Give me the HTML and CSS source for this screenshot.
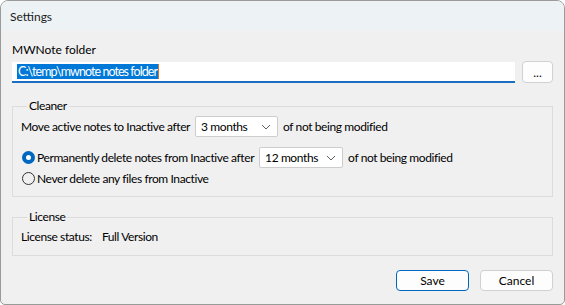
FILE: index.html
```html
<!DOCTYPE html>
<html lang="en">

<head>
    <meta charset="UTF-8">
    <title>Settings</title>
    <link rel="stylesheet" href="styles.css">
</head>

<body>
    <div class="window">
        <div class="titlebar">Settings</div>
        <div class="content">
            <div class="label">MWNote folder</div>
            <div class="folder-row">
                <div class="textbox"><span class="selection">C:\temp\mwnote notes folder</span><span class="caret"></span></div>
                <div class="btn btn-browse">...</div>
            </div>

            <fieldset class="group group-cleaner">
                <legend>Cleaner</legend>
                <div class="row">
                    <span>Move active notes to Inactive after</span>
                    <div class="combo combo-short">
                        <span>3 months</span>
                        <svg width="10" height="6" viewBox="0 0 10 6"><path d="M1 1 L5 5 L9 1" fill="none" stroke="#606060" stroke-width="1"/></svg>
                    </div>
                    <span>of not being modified</span>
                </div>
                <div class="row row-radio">
                    <span class="radio checked"></span>
                    <span>Permanently delete notes from Inactive after</span>
                    <div class="combo combo-long">
                        <span>12 months</span>
                        <svg width="10" height="6" viewBox="0 0 10 6"><path d="M1 1 L5 5 L9 1" fill="none" stroke="#606060" stroke-width="1"/></svg>
                    </div>
                    <span>of not being modified</span>
                </div>
                <div class="row row-radio2">
                    <span class="radio"></span>
                    <span>Never delete any files from Inactive</span>
                </div>
            </fieldset>

            <fieldset class="group group-license">
                <legend>License</legend>
                <div class="row">
                    <span class="status-label">License status:</span>
                    <span>Full Version</span>
                </div>
            </fieldset>

            <div class="buttons">
                <div class="btn btn-default">Save</div>
                <div class="btn">Cancel</div>
            </div>
        </div>
    </div>
</body>

</html>
```

FILE: styles.css
```css
html,
body {
    margin: 0;
    padding: 0;
    background: #ffffff;
}

body {
    font-family: "Segoe UI", Lato, sans-serif;
    font-size: 12px;
    letter-spacing: -0.4px;
    color: #000;
}

.window {
    box-sizing: border-box;
    width: 565px;
    height: 305px;
    border: 1px solid #9a9a9a;
    border-radius: 8px 8px 5px 5px;
    background: #f0f0f0;
    overflow: hidden;
    display: flex;
    flex-direction: column;
}

.titlebar {
    height: 30px;
    background: #edf3f5;
    padding-left: 9px;
    display: flex;
    align-items: center;
    color: #1a1a1a;
    letter-spacing: 0;
}

.content {
    padding: 11px 11px 0 11px;
}

.label {
    height: 20px;
    line-height: 16px;
    letter-spacing: 0;
}

.folder-row {
    display: flex;
    gap: 7px;
}

.textbox {
    flex: 1;
    height: 21px;
    box-sizing: border-box;
    background: #fff;
    border-bottom: 2px solid #1c6fc0;
    display: flex;
    align-items: center;
    padding-left: 5px;
}

.selection {
    background: #0078d7;
    color: #fff;
    font-size: 12.5px;
    line-height: 15px;
    padding: 0 1px;
    letter-spacing: -0.95px;
}

.caret {
    width: 1px;
    height: 15px;
    background: #e07020;
}

.btn {
    box-sizing: border-box;
    height: 21px;
    border: 1px solid #d0d0d0;
    border-radius: 4px;
    background: #fdfdfd;
    display: flex;
    align-items: center;
    justify-content: center;
    letter-spacing: 0;
}

.btn-browse {
    width: 31px;
    height: 22px;
    margin-top: -1px;
}

.group {
    margin: 0;
    border: 1px solid #dcdcdc;
    padding: 0 8px;
}

.group legend {
    padding: 0 2px;
    margin-left: 6px;
    line-height: 14px;
}

.group-cleaner {
    margin-top: 16px;
    height: 98px;
    box-sizing: border-box;
    padding-top: 3px;
}

.row {
    display: flex;
    align-items: center;
    gap: 5px;
    white-space: nowrap;
}

.row-radio {
    margin-top: 10px;
}

.row-radio2 {
    margin-top: 3px;
}

.combo {
    box-sizing: border-box;
    height: 21px;
    background: #fff;
    border: 1px solid #cdcdcd;
    border-radius: 2px;
    display: flex;
    align-items: center;
    justify-content: space-between;
    padding: 0 6px 0 5px;
}

.combo-short {
    width: 83px;
}

.combo-long {
    width: 84px;
}

.radio {
    box-sizing: border-box;
    width: 13px;
    height: 13px;
    border-radius: 50%;
    border: 1px solid #333;
    margin-left: 1px;
    margin-right: -3px;
}

.radio.checked {
    border: 4px solid #0067c0;
    background: #fff;
}

.group-license {
    margin-top: 13px;
    height: 46px;
    box-sizing: border-box;
    padding-top: 5px;
}

.status-label {
    margin-right: 5px;
}

.buttons {
    display: flex;
    justify-content: flex-end;
    gap: 11px;
    margin-top: 14px;
}

.buttons .btn {
    width: 73px;
}

.btn-default {
    border-color: #0067c0;
}
```
